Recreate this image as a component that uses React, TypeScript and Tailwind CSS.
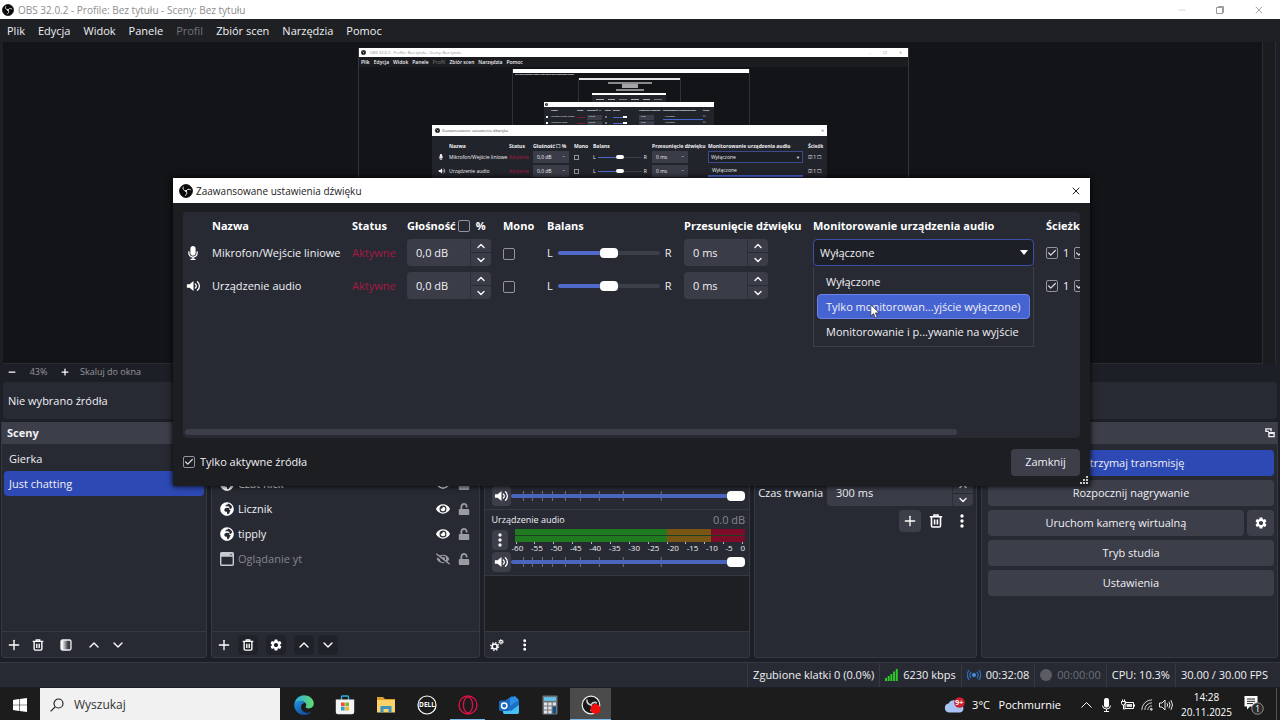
import React from "react";
import { Check, ChevronDown, ChevronUp, Minus, Plus, X } from "lucide-react";
import { FaEye, FaEyeSlash, FaGlobeAfrica, FaMicrophone, FaUnlock } from "react-icons/fa";
import { MdSettings } from "react-icons/md";

/* ---------- icons ---------- */

function ObsLogo({ className = "", ring = "#0b0b0b" }: { className?: string; ring?: string }) {
  return (
    <svg viewBox="0 0 24 24" className={className} aria-hidden="true">
      <circle cx="12" cy="12" r="11" fill="#0b0b0b" stroke={ring} strokeWidth="1.6" />
      <g fill="none" stroke="#e8e8e8" strokeWidth="1.7" strokeLinecap="round">
        <path d="M7.2 5.4c-1.2 3.4.6 6 4.8 6.6" />
        <path d="M19.6 9.8c-3.2-1.7-6-.9-7.6 2.2" />
        <path d="M11 19.6c3-1.9 3.4-4.8 1-7.6" />
      </g>
      <circle cx="12" cy="12" r="1.9" fill="#e8e8e8" />
    </svg>
  );
}

function SpeakerIcon({ className = "" }: { className?: string }) {
  return (
    <svg viewBox="0 0 24 20" className={className} aria-hidden="true">
      <path d="M1 7h4.5L12 1.5v17L5.5 13H1z" fill="currentColor" />
      <g fill="none" stroke="currentColor" strokeWidth="2.2" strokeLinecap="round">
        <path d="M15 6.500a4.500 4.500 0 0 1 0 7" />
        <path d="M18.500 3a9 9 0 0 1 0 14" />
      </g>
    </svg>
  );
}

function TrashIcon({ className = "" }: { className?: string }) {
  return (
    <svg viewBox="0 0 14 14" className={className} fill="none" stroke="currentColor" strokeWidth="1.6" aria-hidden="true">
      <path d="M0.8 2.800h12.400M5 2.500V1h4v1.500" />
      <path d="M2.500 3v8.700q0 1.300 1.300 1.300h6.400q1.300 0 1.300-1.300V3" />
      <path d="M5.600 5.500v5M8.400 5.500v5" />
    </svg>
  );
}

function DotsIcon({ className = "" }: { className?: string }) {
  return (
    <svg viewBox="0 0 4 14" className={className} fill="currentColor" aria-hidden="true">
      <circle cx="2" cy="2" r="1.7" />
      <circle cx="2" cy="7" r="1.7" />
      <circle cx="2" cy="12" r="1.7" />
    </svg>
  );
}

function FilterIcon({ className = "" }: { className?: string }) {
  return (
    <svg viewBox="0 0 12 12" className={className} aria-hidden="true">
      <defs>
        <linearGradient id="fade">
          <stop offset="0.1" stopColor="#fff" />
          <stop offset="0.7" stopColor="#fff" stopOpacity="0.1" />
        </linearGradient>
      </defs>
      <rect x="1" y="1" width="10" height="10" rx="1.5" fill="url(#fade)" stroke="#f0f0f4" strokeWidth="1.3" />
    </svg>
  );
}

function GearsIcon({ className = "" }: { className?: string }) {
  return (
    <svg viewBox="0 0 14 12" className={className} fill="none" stroke="currentColor" aria-hidden="true">
      <circle cx="4.7" cy="7.5" r="2.5" strokeWidth="1.6" />
      <circle cx="4.7" cy="7.5" r="3.9" strokeWidth="1.3" strokeDasharray="1.4 1.66" />
      <circle cx="11" cy="2.8" r="1.4" strokeWidth="1.2" />
      <circle cx="11" cy="2.8" r="2.3" strokeWidth="0.9" strokeDasharray="0.9 0.9" />
    </svg>
  );
}

function WindowIcon({ className = "" }: { className?: string }) {
  return (
    <svg viewBox="0 0 14 14" className={className} aria-hidden="true">
      <rect x="0.7" y="0.7" width="12.6" height="12.6" rx="1" fill="none" stroke="#c9cad2" strokeWidth="1.4" />
      <path d="M0.7 0.7h12.6v4H.7z" fill="#c9cad2" />
      <path d="M10.2 1.7l1.6 1.6M11.8 1.7l-1.6 1.6" stroke="#272a33" strokeWidth="0.7" />
    </svg>
  );
}

/* ---------- controls ---------- */

function Tick({ label, checked = false }: { label: string; checked?: boolean }) {
  return (
    <span className="inline-grid shrink-0 place-items-center align-middle">
      <input
        type="checkbox"
        aria-label={label}
        defaultChecked={checked}
        className="peer col-start-1 row-start-1 size-3 appearance-none rounded-xs border border-[#92939c] bg-transparent"
      />
      <Check className="pointer-events-none invisible col-start-1 row-start-1 size-2.5 text-[#d8d8e0] peer-checked:visible" strokeWidth={3} />
    </span>
  );
}

function Spin({ label, value, wide = false }: { label: string; value: string; wide?: boolean }) {
  return (
    <span className={wide ? "flex h-[26px] w-[146px] overflow-hidden rounded-sm" : "flex h-[27px] w-[84px] overflow-hidden rounded-sm"}>
      <input aria-label={label} defaultValue={value} className="min-w-0 flex-1 border-r border-[#2c2e38] bg-[#3a3c48] pl-[9px] outline-none" />
      <span className="flex w-5 flex-col gap-px">
        <button aria-label={`${label} +`} className="flex flex-1 items-center justify-center bg-[#3a3c48]">
          <ChevronUp className="size-3" strokeWidth={3} />
        </button>
        <button aria-label={`${label} -`} className="flex flex-1 items-center justify-center bg-[#3a3c48]">
          <ChevronDown className="size-3" strokeWidth={3} />
        </button>
      </span>
    </span>
  );
}

const thumb =
  "appearance-none bg-transparent [&::-webkit-slider-thumb]:-mt-[3px] [&::-webkit-slider-thumb]:h-[10px] [&::-webkit-slider-thumb]:w-[18px] [&::-webkit-slider-thumb]:appearance-none [&::-webkit-slider-thumb]:rounded [&::-webkit-slider-thumb]:bg-white [&::-webkit-slider-runnable-track]:h-1 [&::-webkit-slider-runnable-track]:rounded-xs";

function Balance({ label }: { label: string }) {
  return (
    <span className="flex items-center gap-[5px]">
      <span>L</span>
      <input
        type="range"
        aria-label={label}
        defaultValue={50}
        className={`h-3 w-[102px] ${thumb} [&::-webkit-slider-runnable-track]:bg-[linear-gradient(to_right,#5068c8_50%,#3c3e4a_50%)]`}
      />
      <span>R</span>
    </span>
  );
}

function BarButton({ label, filled = false, className = "", children }: { label: string; filled?: boolean; className?: string; children: React.ReactNode }) {
  return (
    <button aria-label={label} className={`flex size-5 items-center justify-center rounded-sm ${filled ? "bg-[#20222a]" : ""} ${className}`}>
      {children}
    </button>
  );
}

/* ---------- main window ---------- */

const menu = ["Plik", "Edycja", "Widok", "Panele", "Profil", "Zbiór scen", "Narzędzia", "Pomoc"];

function TitleBar() {
  return (
    <header className="flex h-[19px] items-center bg-white pr-[15px] pl-0.5 text-[10px] text-[#8d8d8d]">
      <ObsLogo className="size-3" />
      <span className="ml-1">OBS 32.0.2 - Profile: Bez tytułu - Sceny: Bez tytułu</span>
      <span className="ml-auto flex items-center gap-7">
        <button aria-label="Minimalizuj"><Minus className="size-2.5 text-[#bbb]" strokeWidth={1.5} /></button>
        <button aria-label="Przywróć">
          <svg viewBox="0 0 10 10" className="size-2.5" fill="none" stroke="#999" aria-hidden="true">
            <path d="M1.500 2.500h6v6h-6zM3.500 2.500v-1h5v6h-1" />
          </svg>
        </button>
        <button aria-label="Zamknij okno"><X className="size-3" strokeWidth={1.5} /></button>
      </span>
    </header>
  );
}

function MenuBar() {
  return (
    <nav className="flex h-[23px] items-center gap-[13px] bg-[#1e2024] pl-[7px]">
      {menu.map((m) => (
        <button key={m} className={m === "Profil" ? "text-[#73747c]" : ""}>{m}</button>
      ))}
    </nav>
  );
}

/* Captured desktop shown inside the preview canvas. */

const heads = ["", "Nazwa", "Status", "Głośność ☐ %", "Mono", "Balans", "Przesunięcie dźwięku", "Monitorowanie urządzenia audio", "Ścieżk"];

function MiniSlider() {
  return (
    <span className="flex items-center gap-0.5">
      L
      <span className="flex h-px w-11 items-center bg-[#3c3e4a]">
        <span className="h-px w-[18px] bg-[#5068c8]" />
        <span className="h-1 w-2 rounded-xs bg-white" />
      </span>
      R
    </span>
  );
}

function MiniRow({ name, mic = false }: { name: string; mic?: boolean }) {
  return (
    <div className="grid h-[14px] grid-cols-[17px_60px_24px_41px_19px_59px_56px_100px_16px] items-center">
      <span>{mic ? <FaMicrophone className="ml-1.5 size-1.5" /> : <SpeakerIcon className="ml-1.5 h-1.5 w-2" />}</span>
      <span>{name}</span>
      <span className="text-[#a81843]">Aktywne</span>
      <span className="flex h-3 w-9 items-center justify-between bg-[#3a3c48] px-1">0,0 dB <span className="text-[4px]">⌃</span></span>
      <span className="size-[5px] border border-[#92939c]" />
      <MiniSlider />
      <span className="flex h-3 w-9 items-center justify-between bg-[#3a3c48] px-1">0 ms <span className="text-[4px]">⌃</span></span>
      {mic ? (
        <span className="flex h-3 w-[95px] items-center justify-between border border-[#3d4a8c] bg-[#1d1f26] px-0.5">Wyłączone <span className="text-[4px]">▼</span></span>
      ) : (
        <span className="flex h-3 w-[95px] items-center border-b-2 border-[#4a66d0] px-1">Wyłączone</span>
      )}
      <span className="whitespace-nowrap">☑ 1 ☐</span>
    </div>
  );
}

function TinyRow({ name }: { name: string }) {
  return (
    <div className="grid h-[6px] grid-cols-[7px_26px_10px_18px_8px_26px_24px_40px_8px] items-center text-[2px] leading-[4px] whitespace-nowrap">
      <span className="ml-0.5 size-0.5 bg-white" />
      <span>{name}</span>
      <span className="h-px w-2 bg-[#7c1a3a]" />
      <span className="h-[5px] w-[15px] bg-[#3a3c48] pl-0.5">0,0 dB</span>
      <span className="size-0.5 border border-[#777]" />
      <span className="flex items-center">
        <span className="h-px w-2.5 bg-[#5068c8]" />
        <span className="h-0.5 w-1 bg-white" />
      </span>
      <span className="h-[5px] w-[15px] bg-[#3a3c48] pl-0.5">0 ms</span>
      <span className="h-[5px] border-b border-[#4a66d0] pl-0.5">Wyłączone</span>
      <span>☑ 1</span>
    </div>
  );
}

function CapturedDesktop() {
  return (
    <div className="absolute top-1.5 left-[355px] h-full w-[551px] overflow-hidden border-x border-[#34353a] bg-[#131418] text-[5px] leading-[7px]">
      <div className="flex h-[9px] items-center gap-1 bg-white px-0.5 text-[4px] text-[#909090]">
        <ObsLogo className="size-[5px]" />
        <span>OBS 32.0.2 - Profile: Bez tytułu - Sceny: Bez tytułu</span>
        <span className="ml-auto flex gap-3 pr-1"><span>–</span><span>❐</span><span>✕</span></span>
      </div>
      <div className="flex h-[10px] items-center gap-1 bg-[#1b1c20] pl-0.5 font-semibold">
        {menu.map((m) => (
          <span key={m} className={m === "Profil" ? "text-[#66676e]" : ""}>{m}</span>
        ))}
      </div>
      <div className="absolute top-[21px] left-[153px] h-full w-[238px] border-x border-[#303136] bg-[#131418]">
        <div className="h-1 bg-white" />
        <div className="h-1 pl-0.5 text-[2px] leading-[4px] font-bold">{menu.join("   ")}</div>
        <div className="absolute top-[9px] left-[65px] h-full w-[103px] border-x border-[#303136]">
          <div className="h-0.5 bg-[#e4e4e4]" />
          <div className="mx-auto mt-0.5 h-0.5 w-11 bg-[#8b8b8e]" />
          <div className="mx-auto h-1 w-4 bg-[#a5a5a8]" />
          <div className="mx-auto mt-px h-0.5 w-7 bg-[#8b8b8e]" />
        </div>
        <div className="absolute top-[24px] left-[79px] w-[74px] bg-[#22242b]">
          <div className="h-0.5 bg-white" />
          <div className="grid h-2 grid-cols-6 items-center gap-1 px-1">
            <span className="h-px bg-[#b0b0b4]" /><span className="h-px bg-[#b0b0b4]" /><span className="h-px bg-[#77787e]" />
            <span className="h-px bg-[#b0b0b4]" /><span className="h-px bg-[#b0b0b4]" /><span className="h-px bg-[#77787e]" />
          </div>
        </div>
      </div>
      <div className="absolute top-[54px] left-[185px] w-[170px] overflow-hidden bg-[#22242b]">
        <div className="flex h-[5px] items-center bg-white pl-px"><ObsLogo className="size-[3px]" /></div>
        <div className="grid h-[7px] grid-cols-[7px_26px_10px_18px_8px_26px_24px_40px_8px] items-center pt-px text-[2px] leading-[4px] font-bold whitespace-nowrap">
          {heads.map((h, i) => <span key={i}>{h}</span>)}
        </div>
        <TinyRow name="Mikrofon/Wejście liniowe" />
        <TinyRow name="Urządzenie audio" />
      </div>
      <div className="absolute top-[77px] left-[73px] h-full w-[395px] overflow-hidden bg-[#22242b]">
        <div className="flex h-[11px] items-center gap-0.5 bg-white px-[3px] text-[4px] text-[#555]">
          <ObsLogo className="size-[5px]" />
          <span>Zaawansowane ustawienia dźwięku</span>
          <span className="ml-auto">✕</span>
        </div>
        <div className="grid h-[18px] grid-cols-[17px_60px_24px_41px_19px_59px_56px_100px_16px] items-center pt-0.5 font-bold whitespace-nowrap">
          {heads.map((h, i) => <span key={i}>{h}</span>)}
        </div>
        <div className="-mt-1">
          <MiniRow name="Mikrofon/Wejście liniowe" mic />
          <MiniRow name="Urządzenie audio" />
        </div>
      </div>
    </div>
  );
}

function Preview() {
  return (
    <section className="flex min-h-[337px] flex-1 flex-col">
      <div className="flex flex-1">
        <div className="relative ml-[3px] flex-1 overflow-hidden border-b border-[#292b31] bg-[#131418]">
          <CapturedDesktop />
        </div>
        <div className="mr-1 w-3.5 border-x border-[#2a2c32] bg-[#1a1c20]" />
      </div>
      <div className="flex h-[15px] items-center pl-[7px] text-[9px] text-[#96979e]">
        <button aria-label="Pomniejsz"><Minus className="size-2.5 text-white" strokeWidth={3} /></button>
        <span className="w-[43px] text-center">43%</span>
        <button aria-label="Powiększ"><Plus className="size-2.5 text-white" strokeWidth={3} /></button>
        <button className="ml-2.5">Skaluj do okna</button>
      </div>
    </section>
  );
}

function Dock({ title, className, children }: { title: string; className: string; children: React.ReactNode }) {
  return (
    <section className={`flex flex-col overflow-hidden rounded-b border border-t-0 border-[#363944] bg-[#272a33] ${className}`}>
      <h2 className="flex h-[22px] shrink-0 items-center justify-between bg-[#3c3e4a] pr-0.5 pl-[5px] font-bold">
        {title}
        <svg viewBox="0 0 9 9" className="size-2.5" fill="none" stroke="currentColor" strokeWidth="1.2" aria-hidden="true">
          <path d="M3.500 3H.8V.8h4.700V3M3.500 4.300h4.700v3.500H3.500zM3.500 4.800h4.700" />
        </svg>
      </h2>
      {children}
    </section>
  );
}

const bar = "mt-auto flex h-[26px] shrink-0 items-center border-t border-[#363944] pl-0.5 text-white";

function Scenes() {
  return (
    <Dock title="Sceny" className="w-[207px]">
      <ul className="p-0.5">
        <li className="flex h-[25px] items-center rounded-sm pl-[5px]">Gierka</li>
        <li className="flex h-[25px] items-center rounded-sm bg-[#2d49b4] pl-[5px]">Just chatting</li>
      </ul>
      <div className={bar}>
        <BarButton label="Dodaj scenę"><Plus className="size-4" /></BarButton>
        <BarButton label="Usuń scenę" className="ml-1"><TrashIcon className="size-3" /></BarButton>
        <BarButton label="Filtry sceny" className="ml-2"><FilterIcon className="size-3" /></BarButton>
        <BarButton label="Scena w górę" className="ml-2"><ChevronUp className="size-4" /></BarButton>
        <BarButton label="Scena w dół" className="ml-1"><ChevronDown className="size-4" /></BarButton>
      </div>
    </Dock>
  );
}

const sources = [
  { name: "Kamera", kind: "web", on: true },
  { name: "Czat Kick", kind: "web", on: true },
  { name: "Licznik", kind: "web", on: true },
  { name: "tipply", kind: "web", on: true },
  { name: "Oglądanie yt", kind: "window", on: false },
];

function Sources() {
  return (
    <Dock title="Źródła" className="w-[270px]">
      <ul className="py-0.5 pr-[9px] pl-2">
        {sources.map((s) => (
          <li key={s.name} className={`flex h-[25px] items-center ${s.on ? "" : "text-[#85868e]"}`}>
            {s.kind === "web" ? <FaGlobeAfrica className="size-3.5 text-white" /> : <WindowIcon className="size-3.5" />}
            <span className="ml-1">{s.name}</span>
            <button aria-label={`Widoczność ${s.name}`} className="ml-auto">
              {s.on ? <FaEye className="size-3.5 text-white" /> : <FaEyeSlash className="size-3.5 text-[#9a9ba1]" />}
            </button>
            <button aria-label={`Blokada ${s.name}`} className="ml-2 text-[#9a9ba1]">
              <FaUnlock className="size-3" />
            </button>
          </li>
        ))}
      </ul>
      <div className={bar}>
        <BarButton label="Dodaj źródło"><Plus className="size-4" /></BarButton>
        <BarButton label="Usuń źródło" filled className="ml-1"><TrashIcon className="size-3" /></BarButton>
        <BarButton label="Właściwości źródła" filled className="ml-2"><MdSettings className="size-3.5" /></BarButton>
        <BarButton label="Źródło w górę" filled className="ml-2"><ChevronUp className="size-4" /></BarButton>
        <BarButton label="Źródło w dół" filled className="ml-1"><ChevronDown className="size-4" /></BarButton>
      </div>
    </Dock>
  );
}

const marks = [-60, -55, -50, -45, -40, -35, -30, -25, -20, -15, -10, -5, 0];
const volumeTicks = [12, 21, 31, 41, 54, 69, 88, 112, 150];

function Channel({ name }: { name: string }) {
  return (
    <div className="flex h-[66px] flex-col border-b border-[#363944] pr-1 pl-[7px]">
      <div className="flex h-[19px] items-center justify-between text-[9px]">
        <span>{name}</span>
        <span className="text-[11px] text-[#85868e]">0.0 dB</span>
      </div>
      <div className="flex">
        <button aria-label={`Opcje ${name}`} className="mt-px flex h-5 w-4 items-center justify-center rounded-sm bg-[#3c3e4a]">
          <DotsIcon className="h-3.5" />
        </button>
        <div className="ml-1 flex-1">
          <div className="ml-[3px] flex flex-col gap-px bg-[#1d3f22]">
            <div className="h-1.5 bg-[linear-gradient(to_right,#1f7a20_66%,#7a5614_66%,#7a5614_85%,#7d0c28_85%)]" />
            <div className="h-1.5 bg-[linear-gradient(to_right,#1f7a20_66%,#7a5614_66%,#7a5614_85%,#7d0c28_85%)]" />
          </div>
          <div className="flex h-0.5 justify-between pr-0.5 pl-1">
            {marks.map((m) => <span key={m} className="w-px bg-[#b8b9c0]" />)}
          </div>
          <div className="flex h-2 justify-between text-[8px] leading-[8px]">
            {marks.map((m) => <span key={m}>{m}</span>)}
          </div>
        </div>
      </div>
      <div className="flex items-center">
        <button aria-label={`Wycisz ${name}`} className="flex h-5 w-[19px] items-center justify-center rounded-sm bg-[#3c3e4a] text-white">
          <SpeakerIcon className="h-3 w-[15px]" />
        </button>
        <span className="grid flex-1 items-center">
          <svg viewBox="0 0 235 12" className="col-start-1 row-start-1 h-3 w-full" preserveAspectRatio="none" aria-hidden="true">
            {volumeTicks.map((t) => <path key={t} d={`M${t + 0.5} 1v10`} stroke="#70727c" />)}
          </svg>
          <input
            type="range"
            aria-label={`Głośność ${name}`}
            defaultValue={100}
            className={`col-start-1 row-start-1 h-3 w-full ${thumb} [&::-webkit-slider-runnable-track]:bg-[#4a66bc]`}
          />
        </span>
      </div>
    </div>
  );
}

function Mixer() {
  return (
    <Dock title="Mikser dźwięku" className="w-[268px]">
      <Channel name="Mikrofon/Wejście liniowe" />
      <Channel name="Urządzenie audio" />
      <div className="flex-1 bg-[#1e1f23]" />
      <div className={bar}>
        <BarButton label="Zaawansowane ustawienia"><GearsIcon className="h-3 w-3.5" /></BarButton>
        <BarButton label="Menu miksera" className="ml-2"><DotsIcon className="h-3" /></BarButton>
      </div>
    </Dock>
  );
}

function Transitions() {
  return (
    <Dock title="Przejścia scen" className="w-[224px]">
      <div className="flex flex-col gap-1 pt-1.5 pr-[3px] pl-[3px]">
        <select aria-label="Przejście" className="h-[26px] appearance-none rounded-sm bg-[#3a3c48] pl-2">
          <option>Zanikanie</option>
        </select>
        <div className="flex items-center justify-between whitespace-nowrap">
          <span>Czas trwania</span>
          <Spin label="Czas trwania" value="300 ms" wide />
        </div>
        <div className="flex justify-end gap-1 text-white">
          <button aria-label="Dodaj przejście" className="flex size-[22px] items-center justify-center rounded-sm bg-[#3c3e4a]"><Plus className="size-4" /></button>
          <button aria-label="Usuń przejście" className="flex size-[22px] items-center justify-center"><TrashIcon className="size-3.5" /></button>
          <button aria-label="Opcje przejścia" className="flex size-[22px] items-center justify-center"><DotsIcon className="h-3.5" /></button>
        </div>
      </div>
    </Dock>
  );
}

const wide = "h-[26px] rounded-sm bg-[#3c3e4a]";

function Controls() {
  return (
    <Dock title="Sterowanie" className="min-w-[297px] flex-1">
      <div className="flex flex-col gap-1 pt-1.5 pr-[3px] pl-1.5">
        <button className="h-[26px] rounded-sm bg-[#2d49b4]">Zatrzymaj transmisję</button>
        <button className={wide}>Rozpocznij nagrywanie</button>
        <div className="flex gap-[3px]">
          <button className={`${wide} flex-1`}>Uruchom kamerę wirtualną</button>
          <button aria-label="Ustawienia kamery" className={`${wide} flex w-[27px] items-center justify-center text-white`}><MdSettings className="size-3.5" /></button>
        </div>
        <button className={wide}>Tryb studia</button>
        <button className={wide}>Ustawienia</button>
      </div>
    </Dock>
  );
}

function StatusBar() {
  const cell = "flex h-full items-center border-l border-[#363944] px-[5px]";
  return (
    <footer className="mt-1 flex h-[25px] items-center justify-end border-t border-[#363944] bg-[#272a33] pr-[7px]">
      <span className={cell}>Zgubione klatki 0 (0.0%)</span>
      <span className={`${cell} gap-[5px]`}>
        <svg viewBox="0 0 13 12" className="h-3 w-[13px] fill-[#2fc928]" aria-hidden="true">
          <path d="M0 9h2v3H0zM2.700 7h2v5h-2zM5.400 5h2v7h-2zM8.100 2.500h2V12h-2zM10.800 0h2v12h-2z" />
        </svg>
        6230 kbps
      </span>
      <span className={`${cell} gap-[5px]`}>
        <svg viewBox="0 0 14 12" className="h-3 w-3.5" fill="none" stroke="#2f6fc0" strokeWidth="1.2" aria-hidden="true">
          <circle cx="7" cy="6" r="2" fill="#4b8fe0" stroke="none" />
          <path d="M4.200 3a4 4 0 0 0 0 6M9.800 3a4 4 0 0 1 0 6M2.200 1.200a7 7 0 0 0 0 9.600M11.800 1.200a7 7 0 0 1 0 9.600" />
        </svg>
        00:32:08
      </span>
      <span className={`${cell} gap-[5px] text-[#6d6f78]`}>
        <span className="size-3 rounded-full bg-[#5c5d64]" />
        00:00:00
      </span>
      <span className={cell}>CPU: 10.3%</span>
      <span className={cell}>30.00 / 30.00 FPS</span>
    </footer>
  );
}

/* ---------- taskbar ---------- */

function TaskButton({ label, active = false, running = false, children }: { label: string; active?: boolean; running?: boolean; children: React.ReactNode }) {
  return (
    <button aria-label={label} className={`flex h-full w-[41px] flex-col items-center ${active ? "bg-[#4b4b4b]" : ""}`}>
      <span className="flex flex-1 items-center pt-0.5">{children}</span>
      <span className={`h-0.5 ${active ? "w-full bg-[#76b9ed]" : running ? "w-[35px] bg-[#76b9ed]" : "w-0"}`} />
    </button>
  );
}

function Taskbar() {
  return (
    <div className="mt-px flex h-[33px] items-center bg-[#1c1c1c] text-white">
      <button aria-label="Start" className="flex h-full w-10 items-center justify-center">
        <svg viewBox="0 0 14 14" className="size-3.5 fill-white" aria-hidden="true">
          <path d="M0 2l6-.9v5.600H0zM6.600 1L14 0v6.700H6.600zM0 7.300h6v5.600L0 12zM6.600 7.300H14V14l-7.400-1z" />
        </svg>
      </button>
      <label className="flex h-full w-60 items-center gap-2.5 bg-[#f1f1f1] pl-2.5 text-[12px] text-[#333]">
        <svg viewBox="0 0 14 14" className="size-3.5" fill="none" stroke="#222" strokeWidth="1.2" aria-hidden="true">
          <circle cx="8.500" cy="5.500" r="4.500" />
          <path d="M5.200 8.800L.6 13.400" />
        </svg>
        <input aria-label="Wyszukaj" placeholder="Wyszukaj" className="w-40 bg-transparent outline-none placeholder:text-[#333]" />
      </label>
      <div className="ml-[3px] flex h-full">
        <TaskButton label="Edge">
          <svg viewBox="0 0 20 20" className="size-5" aria-hidden="true">
            <defs>
              <linearGradient id="edgeTop" x1="0" y1="0.5" x2="1" y2="0.5"><stop stopColor="#2aa9e8" /><stop offset="1" stopColor="#62dc6a" /></linearGradient>
              <linearGradient id="edgeLow" x1="0" y1="0" x2="0.6" y2="1"><stop stopColor="#2196e0" /><stop offset="1" stopColor="#114a9e" /></linearGradient>
            </defs>
            <path d="M.4 9C1 3.800 5 .2 10 .2c6 0 9.800 4.400 9.800 8.300 0 3-2.300 4.900-5 4.900-2 0-3.200-.6-3.200-1.300 0-.5.700-.8.700-2 0-2-2-3.800-5-3.800C4 6.300 1.500 7.500.4 9z" fill="url(#edgeTop)" />
            <path d="M.2 10c0-2 2.500-3.900 5.600-3.900 2.200 0 4 .7 5 1.900-2 0-3.800 1.800-3.800 4.200 0 3.200 3 5.500 6.600 5.500 1.800 0 3.200-.4 4.300-1-1.600 2-4.600 3.300-7.600 3.300C4.600 20 .2 15.500.2 10z" fill="url(#edgeLow)" />
          </svg>
        </TaskButton>
        <TaskButton label="Microsoft Store">
          <svg viewBox="0 0 20 20" className="size-5" aria-hidden="true">
            <path d="M6.500 5V2q0-1 1-1h5q1 0 1 1v3" fill="none" stroke="#35aadf" strokeWidth="1.4" />
            <path d="M.8 4.500h18.400v12.300q0 2.500-2.500 2.500H3.300Q.8 19.300.8 16.800z" fill="#f3f3f3" />
            <path d="M6 7.500h3.700v3.700H6z" fill="#ee5230" /><path d="M10.300 7.500H14v3.700h-3.700z" fill="#7eb62c" />
            <path d="M6 11.800h3.700v3.700H6z" fill="#2a9fe0" /><path d="M10.300 11.800H14v3.700h-3.700z" fill="#f4b51e" />
          </svg>
        </TaskButton>
        <TaskButton label="Eksplorator plików">
          <svg viewBox="0 0 20 18" className="h-[18px] w-5" aria-hidden="true">
            <path d="M1 1h6l2 2h10v4H1z" fill="#dfa02c" /><path d="M1 4h18v12.500H1z" fill="#fbd267" />
            <path d="M4.500 16.500V10h11v6.500h-3V13h-5v3.500z" fill="#3d93c4" />
          </svg>
        </TaskButton>
        <TaskButton label="Dell">
          <svg viewBox="0 0 20 20" className="size-5" aria-hidden="true">
            <circle cx="10" cy="10" r="9" fill="none" stroke="#fff" strokeWidth="1.2" />
            <text x="10" y="12.3" textAnchor="middle" fontSize="6.5" fontWeight="700" fill="#fff">DELL</text>
          </svg>
        </TaskButton>
        <TaskButton label="Opera" running>
          <svg viewBox="0 0 20 20" className="size-5" fill="none" stroke="#e0114a" aria-hidden="true">
            <circle cx="10" cy="10" r="9" strokeWidth="1.3" />
            <ellipse cx="10" cy="10" rx="4.6" ry="7.8" strokeWidth="1.3" />
          </svg>
        </TaskButton>
        <TaskButton label="Outlook">
          <svg viewBox="0 0 22 20" className="h-5 w-[22px]" aria-hidden="true">
            <path d="M5 7l9-6 7 5v11q0 2-2 2H7q-2 0-2-2z" fill="#1a6fc4" />
            <path d="M12 3l5-2 4 4-9 6z" fill="#2c8ee4" />
            <path d="M5 12l8 4 8-6v7q0 2-2 2H7q-2 0-2-2z" fill="#49c0f5" />
            <rect x="1" y="5.5" width="10.5" height="10.5" rx="1.5" fill="#1668bb" />
            <circle cx="6.2" cy="10.7" r="2.7" fill="none" stroke="#fff" strokeWidth="1.5" />
          </svg>
        </TaskButton>
        <TaskButton label="Kalkulator">
          <svg viewBox="0 0 16 20" className="h-5 w-4" aria-hidden="true">
            <rect x="0.5" y="0.5" width="15" height="19" rx="1" fill="#6d757b" />
            <path d="M2 2.200h12v3.600H2z" fill="#63c4ec" />
            <path d="M2 7.500h3.300v3H2zM6.300 7.500h3.300v3H6.300zM10.700 7.500H14v3h-3.300zM2 11.500h3.300v3H2zM6.300 11.500h3.300v3H6.300zM2 15.500h3.300v3H2zM6.300 15.500h3.300v3H6.300z" fill="#dfe3e6" />
            <path d="M10.700 11.500H14v7h-3.300z" fill="#17507f" />
          </svg>
        </TaskButton>
        <TaskButton label="OBS" active>
          <svg viewBox="0 0 20 20" className="size-5" aria-hidden="true">
            <circle cx="10" cy="10" r="8.8" fill="#181818" stroke="#eee" strokeWidth="1.2" />
            <path d="M6 4.500q-.5 4.500 4 5.500M16 8q-4-2-6 2M9.500 16q3-3 .5-6" fill="none" stroke="#ccc" strokeWidth="1.6" />
            <circle cx="14.5" cy="14" r="5" fill="#f20d0d" />
          </svg>
        </TaskButton>
      </div>
      <div className="ml-auto flex h-full items-center">
        <svg viewBox="0 0 22 16" className="h-4 w-[22px]" aria-hidden="true">
          <path d="M5 15.500a4.500 4.500 0 0 1-.5-8.900A6 6 0 0 1 15.500 7a4.300 4.300 0 0 1 .5 8.500z" fill="#a9c4f2" />
          <circle cx="15.5" cy="5.5" r="5.3" fill="#cf1f30" />
          <text x="15.3" y="8.2" textAnchor="middle" fontSize="7" fontWeight="700" fill="#fff">9+</text>
        </svg>
        <span className="ml-1.5">3°C&nbsp;&nbsp; Pochmurnie</span>
        <span className="ml-5 flex items-center gap-1.5">
          <svg viewBox="0 0 11 6" className="h-1.5 w-[11px]" fill="none" stroke="#fff" aria-hidden="true"><path d="M.5 5.500l5-5 5 5" /></svg>
          <svg viewBox="0 0 9 14" className="mx-1 h-3.5 w-[9px]" aria-hidden="true"><rect x="2" y="0" width="5" height="9.5" rx="2.2" fill="#fff" /><path d="M.5 7.500q0 3.500 4 3.500t4-3.500M4.500 11v3M2 13.500h5" fill="none" stroke="#fff" /></svg>
          <svg viewBox="0 0 14 12" className="h-3 w-3.5" fill="none" stroke="#fff" aria-hidden="true"><path d="M4 3.500h8.500v6H4zM13.500 5.500v2M.5 2.500h4v2q0 1.500-2 1.500t-2-1.500zM1.500.5v2M3.500.5v2M2.500 6v4H4" /><path d="M5.500 5h5.500v3H5.500z" fill="#ddd" stroke="none" /></svg>
          <svg viewBox="0 0 12 12" className="size-3" fill="none" stroke="#ccc" aria-hidden="true"><path d="M.8 11A10.200 10.200 0 0 1 11 .8M3.800 11A7.200 7.200 0 0 1 11 3.800M6.800 11A4.200 4.200 0 0 1 11 6.800" /><circle cx="10.3" cy="10.3" r="1" fill="#ccc" /></svg>
          <svg viewBox="0 0 14 12" className="h-3 w-3.5" fill="none" stroke="#fff" strokeWidth="0.9" aria-hidden="true"><path d="M.5 4h2.500L6 1v10L3 8H.5zM8 4.200q1.200 1.800 0 3.600M10 2.700q2 3.300 0 6.600M12 1.200q3 4.800 0 9.600" /></svg>
        </span>
        <span className="ml-2 flex flex-col items-center text-[10px] leading-[15px]"><span>14:28</span><span>20.11.2025</span></span>
        <button aria-label="Powiadomienia" className="ml-3">
          <svg viewBox="0 0 20 20" className="size-5" aria-hidden="true">
            <path d="M.5 1h13v10.500H6l-3 3v-3H.5z" fill="#fff" />
            <path d="M3 4h8M3 6.300h8M3 8.600h6" stroke="#222" />
            <circle cx="13.5" cy="13.5" r="5.7" fill="#2a2a2a" stroke="#999" />
            <text x="13.5" y="16.7" textAnchor="middle" fontSize="9" fill="#fff">1</text>
          </svg>
        </button>
        <span className="ml-3 h-full w-1 border-l border-[#555]" />
      </div>
    </div>
  );
}

/* ---------- advanced audio dialog ---------- */

const devices = [
  { name: "Mikrofon/Wejście liniowe", mic: true },
  { name: "Urządzenie audio", mic: false },
];

function MonitorSelect() {
  return (
    <div className="relative w-[221px]">
      <select aria-label="Monitorowanie urządzenia audio" className="h-[27px] w-full appearance-none rounded-sm border border-[#3c4ea8] bg-[#1d1f26] pl-1.5 outline-none">
        <option>Wyłączone</option>
      </select>
      <svg viewBox="0 0 8 5" className="pointer-events-none absolute top-[11px] right-1.5 h-[5px] w-2 fill-white" aria-hidden="true"><path d="M0 0h8L4 5z" /></svg>
      <ul role="listbox" className="absolute top-7 left-0 z-10 w-full border border-t-0 border-[#3c3f4c] bg-[#272a33] px-[3px] py-0.5">
        <li role="option" aria-selected="false" className="flex h-[25px] items-center pl-[9px]">Wyłączone</li>
        <li role="option" aria-selected="true" className="flex h-[25px] items-center rounded-sm border border-[#6b82ea] bg-[#4663d2] pl-2">Tylko monitorowan...yjście wyłączone)</li>
        <li role="option" aria-selected="false" className="flex h-[25px] items-center pl-[9px]">Monitorowanie i p...ywanie na wyjście</li>
      </ul>
      <svg viewBox="0 0 12 18" className="absolute top-[65px] left-[57px] z-20 h-[15px] w-2.5" aria-hidden="true">
        <path d="M1 1v13.500l3.200-3 2.300 5.200 2.200-1-2.300-5H11z" fill="#fff" stroke="#222" strokeWidth="0.8" />
      </svg>
    </div>
  );
}

function AudioDialog() {
  return (
    <div role="dialog" aria-label="Zaawansowane ustawienia dźwięku" className="absolute top-[178px] left-[173px] flex w-[917px] flex-col bg-[#1d1e22] shadow-[0_0_6px_#000]">
      <header className="flex h-[25px] items-center bg-white pr-2 pl-1.5 text-[10px] text-[#222]">
        <ObsLogo className="size-3.5" />
        <span className="ml-[3px]">Zaawansowane ustawienia dźwięku</span>
        <button aria-label="Zamknij okno dialogowe" className="ml-auto"><X className="size-3" strokeWidth={2} /></button>
      </header>
      <div className="mx-[10px] mt-[9px] flex h-[226px] flex-col overflow-hidden rounded-sm bg-[#272a33]">
        <table className="w-[960px] table-fixed border-collapse text-left">
          <colgroup>
            <col className="w-[29px]" /><col className="w-[140px]" /><col className="w-[55px]" /><col className="w-[96px]" /><col className="w-[44px]" />
            <col className="w-[137px]" /><col className="w-[129px]" /><col className="w-[233px]" /><col />
          </colgroup>
          <thead>
            <tr className="h-6 whitespace-nowrap text-white">
              <td />
              <th className="pt-1">Nazwa</th>
              <th className="pt-1">Status</th>
              <th className="pt-1"><span className="flex items-center gap-0.5">Głośność <Tick label="Procenty" /> <span className="ml-1">%</span></span></th>
              <th className="pt-1">Mono</th>
              <th className="pt-1">Balans</th>
              <th className="pt-1">Przesunięcie dźwięku</th>
              <th className="pt-1">Monitorowanie urządzenia audio</th>
              <th className="pt-1">Ścieżki</th>
            </tr>
          </thead>
          <tbody>
            {devices.map((d) => (
              <tr key={d.name} className="h-[33px] whitespace-nowrap">
                <td className="text-white">{d.mic ? <FaMicrophone className="ml-[3px] size-3.5" /> : <SpeakerIcon className="ml-[3px] h-3 w-[15px]" />}</td>
                <td>{d.name}</td>
                <td className="text-[#a81843]">Aktywne</td>
                <td><Spin label={`Głośność ${d.name}`} value="0,0 dB" /></td>
                <td><Tick label={`Mono ${d.name}`} /></td>
                <td><Balance label={`Balans ${d.name}`} /></td>
                <td><Spin label={`Przesunięcie ${d.name}`} value="0 ms" /></td>
                <td>{d.mic && <MonitorSelect />}</td>
                <td><span className="flex items-center gap-[5px]"><Tick label={`Ścieżka 1 ${d.name}`} checked />1 <Tick label={`Ścieżka 2 ${d.name}`} checked />2</span></td>
              </tr>
            ))}
          </tbody>
        </table>
        <div className="mt-auto mb-[3px] ml-0.5 h-1.5 w-[772px] rounded bg-[#3c3e4a]" />
      </div>
      <div className="flex h-12 items-center justify-between px-[10px]">
        <label className="flex items-center gap-[5px]"><Tick label="Tylko aktywne źródła" checked />Tylko aktywne źródła</label>
        <button className="h-[27px] w-[69px] rounded-sm bg-[#3c3e4a]">Zamknij</button>
      </div>
      <svg viewBox="0 0 8 8" className="absolute right-0.5 bottom-0.5 size-2 fill-[#c8c8c8]" aria-hidden="true">
        <path d="M6 0h2v2H6zM3 3h2v2H3zM6 3h2v2H6zM0 6h2v2H0zM3 6h2v2H3zM6 6h2v2H6z" />
      </svg>
    </div>
  );
}

export default function App() {
  return (
    <div className="relative flex min-h-screen flex-col overflow-hidden bg-[#1d1f26] font-['Open_Sans','Noto_Sans',sans-serif] text-[11px] leading-4 text-[#f0f0f4]">
      <TitleBar />
      <MenuBar />
      <Preview />
      <div className="mx-[3px] mt-[3px] flex h-[37px] items-center rounded-sm bg-[#272a33] pl-[5px]">Nie wybrano źródła</div>
      <main className="mt-[3px] flex h-[236px] gap-1 pr-0.5 pl-px">
        <Scenes />
        <Sources />
        <Mixer />
        <Transitions />
        <Controls />
      </main>
      <StatusBar />
      <Taskbar />
      <AudioDialog />
    </div>
  );
}
